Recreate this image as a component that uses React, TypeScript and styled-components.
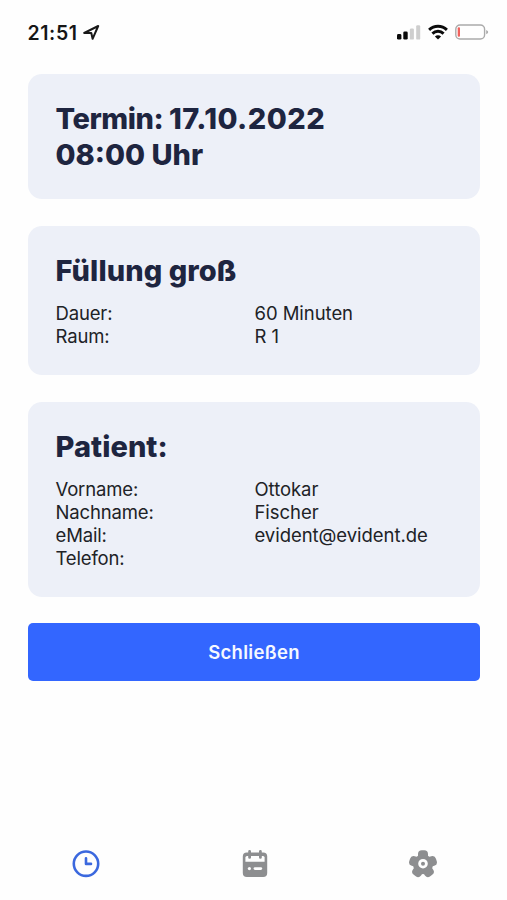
import React from "react";
import styled, { createGlobalStyle } from "styled-components";

const GlobalStyle = createGlobalStyle`
  * { box-sizing: border-box; }
  body {
    margin: 0;
    background: #fefefe;
    font-family: Inter, "Liberation Sans", sans-serif;
  }
`;

const Screen = styled.div`
  display: flex;
  flex-direction: column;
  width: 507px;
  height: 900px;
  overflow: hidden;
`;

const StatusBar = styled.header`
  display: flex;
  align-items: center;
  justify-content: space-between;
  height: 64px;
  padding: 0 18px 0 27.5px;
`;

const StatusGroup = styled.div<{ $gap: number }>`
  display: flex;
  align-items: center;
  gap: ${(p) => p.$gap}px;
`;

const Time = styled.span`
  padding-top: 1px;
  font-size: 19.5px;
  font-weight: 600;
  line-height: 24px;
  letter-spacing: 0.6px;
  color: #161616;
`;

const Content = styled.main`
  display: flex;
  flex-direction: column;
  flex: 1;
  gap: 27px;
  padding: 10px 27px 0 28px;
`;

const Card = styled.section<{ $height: number }>`
  height: ${(p) => p.$height}px;
  padding: 27px 27px 0 27.5px;
  border-radius: 14px;
  background: #edf0f8;
`;

const Heading = styled.h1`
  margin: 0;
  font-size: 29px;
  font-weight: 800;
  line-height: 36px;
  color: #1e2540;
  white-space: nowrap;
`;

const Tracked = styled.span<{ $spacing: number }>`
  letter-spacing: ${(p) => p.$spacing}px;
`;

const Details = styled.dl`
  display: grid;
  grid-template-columns: 199px 1fr;
  grid-auto-rows: 23px;
  margin: 13px 0 0;
`;

const Label = styled.dt`
  font-size: 18.5px;
  line-height: 23px;
  letter-spacing: -0.15px;
  color: #202226;
  white-space: nowrap;
`;

const Value = styled(Label).attrs({ as: "dd" })`
  margin: 0;
  letter-spacing: -0.05px;
`;

const CloseButton = styled.button`
  height: 58px;
  margin-top: -0.5px;
  padding: 0 0 1px;
  border: 0;
  border-radius: 5px;
  background: #3366ff;
  color: #f5f8ff;
  font: 600 18.5px/24px Inter, "Liberation Sans", sans-serif;
  letter-spacing: 0.3px;
`;

const TabBar = styled.nav`
  display: grid;
  grid-template-columns: repeat(3, 168.5px);
  align-items: center;
  height: 73px;
  padding-left: 2px;
`;

const Tab = styled.a<{ $active?: boolean }>`
  display: flex;
  justify-content: center;
  color: ${(p) => (p.$active ? "#3b68de" : "#8d8e90")};
`;

const LocationIcon = () => (
  <svg width="17" height="18" viewBox="0 0 17 18" fill="none">
    <path d="M1.2 10 15.2 3 9.6 15.8 8.3 10Z" stroke="#181818" strokeWidth="2" strokeLinejoin="round" />
  </svg>
);

const SignalIcon = () => (
  <svg width="24" height="16" viewBox="0 0 24 16">
    <rect x="0" y="10" width="4.4" height="5.6" rx="1.4" fill="#0b0b0b" />
    <rect x="6.3" y="7.4" width="4.4" height="8.2" rx="1.4" fill="#0b0b0b" />
    <rect x="12.9" y="4.4" width="4" height="11.2" rx="1.2" fill="#cecece" />
    <rect x="19.2" y="1.2" width="4" height="14.4" rx="1.2" fill="#cecece" />
  </svg>
);

const WifiIcon = () => (
  <svg width="20" height="16" viewBox="0 0 20 16" fill="none" stroke="#0b0b0b" strokeWidth="2.9">
    <path d="M1.1 5.9C6.2 1 13.8 1 18.9 5.9" />
    <path d="M4.4 9.6C7.6 6.5 12.4 6.5 15.6 9.6" />
    <path d="M10 15.4 6.9 12.4C8.6 10.7 11.4 10.7 13.1 12.4Z" fill="#0b0b0b" stroke="none" />
  </svg>
);

const BatteryIcon = () => (
  <svg width="34" height="16" viewBox="0 0 34 16">
    <rect x="0.8" y="1" width="28.8" height="14" rx="4.2" fill="none" stroke="#aaa" strokeWidth="1.4" />
    <rect x="2.7" y="3.2" width="2.3" height="9.5" rx="1" fill="#f0625d" />
    <path d="M31.2 5.9Q33.2 6.7 33.2 8.1T31.2 10.2Z" fill="#aaa" />
  </svg>
);

const ClockIcon = () => (
  <svg width="28" height="28" viewBox="0 0 28 28" fill="none" stroke="currentColor">
    <circle cx="14" cy="13.7" r="12.2" strokeWidth="2.6" />
    <path d="M14 8.2V13.9H19" strokeWidth="2.6" strokeLinecap="round" strokeLinejoin="round" />
  </svg>
);

const CalendarIcon = () => (
  <svg width="26" height="28" viewBox="0 0 26 28">
    <rect x="0.8" y="2.6" width="24.4" height="24.4" rx="4" fill="currentColor" />
    <path d="M3.4 11.8V7.6Q3.4 6 5 6H21Q22.6 6 22.6 7.6V11.8Z" fill="#fefefe" />
    <path d="M7.6 1.4V7.4M18.4 1.4V7.4" stroke="currentColor" strokeWidth="2.8" strokeLinecap="round" />
    <circle cx="7.4" cy="18.6" r="1.6" fill="#fefefe" />
    <path d="M13 18.6H18.8" stroke="#fefefe" strokeWidth="2.8" strokeLinecap="round" />
  </svg>
);

const SettingsIcon = () => (
  <svg width="28" height="28" viewBox="0 0 28 28">
    <circle cx="14" cy="14.2" r="10" fill="currentColor" />
    {[0, 72, 144, 216, 288].map((angle) => (
      <rect
        key={angle}
        x="9"
        y="0.2"
        width="10"
        height="10"
        rx="3.8"
        fill="currentColor"
        transform={`rotate(${angle} 14 14.2)`}
      />
    ))}
    <circle cx="14" cy="13.7" r="3.4" fill="none" stroke="#fefefe" strokeWidth="2.8" />
  </svg>
);

const appointment = [
  ["Dauer:", "60 Minuten"],
  ["Raum:", "R 1"],
];

const patient = [
  ["Vorname:", "Ottokar"],
  ["Nachname:", "Fischer"],
  ["eMail:", "evident@evident.de"],
  ["Telefon:", ""],
];

const DetailList = ({ rows }: { rows: string[][] }) => (
  <Details>
    {rows.map(([label, value]) => (
      <React.Fragment key={label}>
        <Label>{label}</Label>
        <Value>{value}</Value>
      </React.Fragment>
    ))}
  </Details>
);

export default function App() {
  return (
    <>
      <GlobalStyle />
      <Screen>
        <StatusBar>
          <StatusGroup $gap={5}>
            <Time>21:51</Time>
            <LocationIcon />
          </StatusGroup>
          <StatusGroup $gap={7}>
            <SignalIcon />
            <WifiIcon />
            <BatteryIcon />
          </StatusGroup>
        </StatusBar>
        <Content>
          <Card $height={124.5}>
            <Heading>
              <Tracked $spacing={-0.45}>Termin: </Tracked>
              <Tracked $spacing={0.45}>17.10.2022</Tracked>
              <br />
              <Tracked $spacing={0}>08:00 Uhr</Tracked>
            </Heading>
          </Card>
          <Card $height={149}>
            <Heading>
              <Tracked $spacing={0.08}>Füllung groß</Tracked>
            </Heading>
            <DetailList rows={appointment} />
          </Card>
          <Card $height={195}>
            <Heading>
              <Tracked $spacing={0.05}>Patient:</Tracked>
            </Heading>
            <DetailList rows={patient} />
          </Card>
          <CloseButton>Schließen</CloseButton>
        </Content>
        <TabBar>
          <Tab $active aria-label="Termine">
            <ClockIcon />
          </Tab>
          <Tab aria-label="Kalender">
            <CalendarIcon />
          </Tab>
          <Tab aria-label="Einstellungen">
            <SettingsIcon />
          </Tab>
        </TabBar>
      </Screen>
    </>
  );
}
